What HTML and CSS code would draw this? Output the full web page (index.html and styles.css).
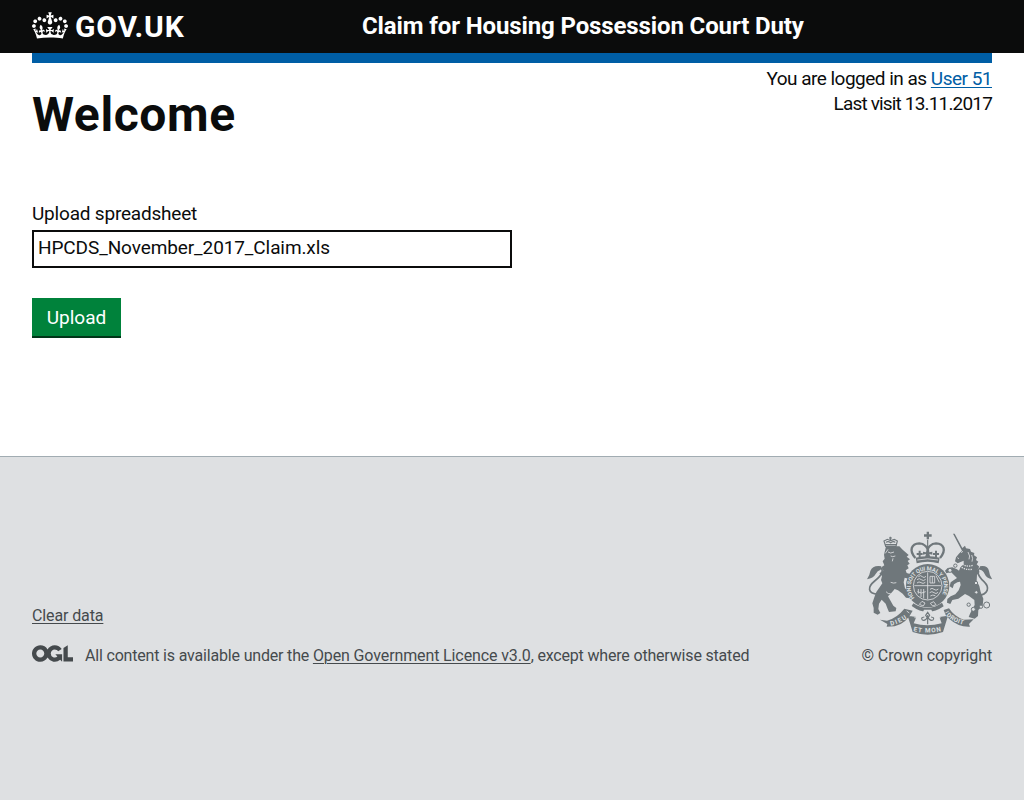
FILE: index.html
```html
<!DOCTYPE html>
<html lang="en">
<head>
<meta charset="utf-8">
<title>Claim for Housing Possession Court Duty</title>
<link rel="stylesheet" href="styles.css">
</head>
<body>
<header class="header">
  <div class="header-inner">
    <a class="logo" href="#">
      <svg class="crown" viewBox="0 0 132 97" aria-hidden="true"><path fill="currentColor" fill-rule="evenodd" d="M25 30.2c3.5 1.5 7.7-.2 9.1-3.7 1.5-3.6-.2-7.8-3.9-9.2-3.6-1.4-7.6.3-9.1 3.9-1.4 3.5.3 7.5 3.9 9zM9 39.5c3.6 1.5 7.8-.2 9.2-3.7 1.5-3.6-.2-7.8-3.9-9.1-3.6-1.5-7.6.2-9.1 3.8-1.4 3.5.3 7.5 3.8 9zM4.4 57.2c3.5 1.5 7.7-.2 9.1-3.8 1.5-3.6-.2-7.7-3.9-9.1-3.5-1.5-7.6.3-9.1 3.8-1.4 3.5.3 7.6 3.9 9.1zm38.3-21.4c3.5 1.5 7.7-.2 9.1-3.8 1.5-3.6-.2-7.7-3.9-9.1-3.6-1.5-7.6.3-9.1 3.8-1.3 3.6.4 7.7 3.9 9.1zm64.4-5.6c-3.6 1.5-7.8-.2-9.1-3.7-1.5-3.6.2-7.8 3.8-9.2 3.6-1.4 7.7.3 9.2 3.9 1.3 3.5-.4 7.5-3.9 9zm15.9 9.3c-3.6 1.5-7.7-.2-9.1-3.7-1.5-3.6.2-7.8 3.7-9.1 3.6-1.5 7.7.2 9.2 3.8 1.5 3.5-.3 7.5-3.8 9zm4.7 17.7c-3.6 1.5-7.8-.2-9.2-3.8-1.5-3.6.2-7.7 3.9-9.1 3.6-1.5 7.7.3 9.2 3.8 1.3 3.5-.4 7.6-3.9 9.1zM89.3 35.8c-3.6 1.5-7.8-.2-9.2-3.8-1.4-3.6.2-7.7 3.9-9.1 3.6-1.5 7.7.3 9.2 3.8 1.4 3.6-.3 7.7-3.9 9.1zM69.7 17.7l8.9 4.7V9.3l-8.9 2.8c-.2-.3-.5-.6-.9-.9L72.4 0H59.6l3.5 11.2c-.3.3-.6.5-.9.9l-8.8-2.8v13.1l8.8-4.7c.3.3.6.7.9.9l-5 15.4v.1c-.2.8-.4 1.6-.4 2.4 0 4.1 3.1 7.5 7 8.1h.2c.3 0 .7.1 1 .1.4 0 .7 0 1-.1h.2c4-.6 7.1-4.1 7.1-8.1 0-.8-.1-1.7-.4-2.4V34l-5.1-15.4c.4-.2.7-.6 1-.9zM66 92.8c16.9 0 32.8 1.1 47.1 3.2 4-16.9 8.9-26.7 14-33.5l-9.6-3.4c1 4.9 1.1 7.2 0 10.2-1.5-1.4-3-4.3-4.2-8.7L108.6 76c2.8-2 5-3.2 7.5-3.3-4.4 9.4-10 11.9-13.6 11.2-4.3-.8-6.3-4.6-5.6-7.9 1-4.7 5.7-5.9 8-.5 4.3-8.7-3-11.4-7.6-8.8 7.1-7.2 7.9-13.5 2.1-21.1-8 6.1-8.1 12.3-4.5 20.8-4.7-5.4-12.1-2.5-9.5 6.2 3.4-5.2 7.9-2 7.2 3.1-.6 4.3-6.4 7.8-13.5 7.2-10.3-.9-10.9-8-11.2-13.8 2.5-.5 7.1 1.8 11 7.3L80.2 60c-4.1 4.4-8 5.3-12.3 5.4 1.4-4.4 8-11.6 8-11.6H55.5s6.4 7.2 7.9 11.6c-4.2-.1-8-1-12.3-5.4l1.4 16.4c3.9-5.5 8.5-7.7 10.9-7.3-.3 5.8-.9 12.8-11.1 13.8-7.2.6-12.9-2.9-13.5-7.2-.7-5 3.8-8.3 7.1-3.1 2.7-8.7-4.6-11.6-9.4-6.2 3.7-8.5 3.6-14.7-4.6-20.8-5.8 7.6-5 13.9 2.2 21.1-4.7-2.6-11.9.1-7.7 8.8 2.3-5.5 7.1-4.2 8.1.5.7 3.3-1.3 7.1-5.7 7.9-3.5.7-9-1.8-13.5-11.2 2.5.1 4.7 1.3 7.5 3.3l-4.7-15.4c-1.2 4.4-2.7 7.2-4.3 8.7-1.1-3-.9-5.3 0-10.2l-9.5 3.4c5 6.9 9.9 16.7 14 33.5 14.8-2.1 30.8-3.2 47.7-3.2z"/></svg>
      <span class="logo-text">GOV.UK</span>
    </a>
    <a class="service" href="#">Claim for Housing Possession Court Duty</a>
  </div>
</header>
<div class="container">
  <main class="main">
    <div class="intro">
      <h1 class="title">Welcome</h1>
      <div class="session">
        <div class="login">You are logged in as <a class="link" href="#">User 51</a></div>
        <div class="visit">Last visit 13.11.2017</div>
      </div>
    </div>
    <form class="form">
      <label class="label" for="sheet"><span class="label-text">Upload spreadsheet</span></label>
      <input class="input" id="sheet" type="text" value="HPCDS_November_2017_Claim.xls">
      <button class="button" type="button">Upload</button>
    </form>
  </main>
</div>
<footer class="footer">
  <div class="footer-inner">
    <div class="footer-left">
      <a class="footer-link clear" href="#">Clear data</a>
      <div class="licence">
        <svg class="ogl" viewBox="0 0 483.2 195.7" aria-hidden="true"><path fill="currentColor" d="M421.5 142.8V.1l-50.7 32.3v161.1h112.4v-50.7zm-122.3-9.6A47.12 47.12 0 0 1 221 97.8c0-26 21.1-47.1 47.1-47.1 16.7 0 31.4 8.7 39.7 21.8l42.7-27.2A97.63 97.63 0 0 0 268.1 0c-36.5 0-68.3 20.1-85.1 49.7A98 98 0 0 0 97.8 0C43.9 0 0 43.9 0 97.8s43.9 97.8 97.8 97.8c36.5 0 68.3-20.1 85.1-49.7a97.76 97.76 0 0 0 149.6 25.4l19.4 22.2h3v-87.8h-80l24.3 27.5zM97.8 145c-26 0-47.1-21.1-47.1-47.1s21.1-47.1 47.1-47.1 47.1 21.1 47.1 47.1S123.8 145 97.8 145"/></svg>
        <span class="licence-text">All content is available under the <a class="footer-link" href="#">Open Government Licence v3.0</a>, except where otherwise stated</span>
      </div>
    </div>
    <a class="copyright" href="#">
      <svg class="arms" viewBox="18 18 378 312" aria-hidden="true">
        <defs>
          <path id="garter" d="M164 219A50 50 0 1 1 240 219"/>
          <path id="scroll-l" d="M92 302Q122 296 146 277"/>
          <path id="scroll-m" d="M160 318Q203 328 248 317"/>
          <path id="scroll-r" d="M258 272Q284 294 316 301"/>
        </defs>
        <!-- lion -->
        <path class="ink" d="M78 64h40l10 10 18 16-6 5 10 8-7 5 6 8-7 5 4 9-9 6 3 8 12 4 2 8-6 6-14-4-3 14 4 18 12 10 7 10-4 10-12-2-10-12-14-10-10-4-8 10-12 12 8 14 8 14 9 7-2 10-20 2-4-9-6-16-12-12-8 12-2 16 6 12-8 5-12-6 0-14-4-14 6-18 6-16 10-14 8-12-4-10 3-12-8-8 12-8-6-10 9-6-5-12 6-8-2-12z"/>
        <path class="line tail" d="M54 208C22 206 22 186 44 168C70 148 74 128 54 127"/>
        <path class="ink" d="M64 124Q38 120 31 138Q29 152 21 163Q40 160 47 147Q52 137 62 134z"/>
        <path class="line" d="M77 64l-5-16 10-5 10 4 11-4 9 5-4 16zM77 59h32M91 35v11M87 39h9"/>
        <path class="line" d="M78 52q6-5 14 1 8-6 14-1"/>
        <path class="cut" d="M84 81l8 3 10-3M92 93l6 2 8-2M99 100l-2 9M84 73l-8 12"/>
        <path class="cut" d="M92 172q9 4 17 1M78 200q6 8 14 6"/>
        <!-- unicorn -->
        <path class="ink" d="M279 26l5 0 23 43 8-7 3 8 12 2 3 8 10 4-1 7 9 6-3 8 7 5-5 8 8 7-5 8 6 8-8 8-1 18 8 16 4 18 8 20-2 22-13 12-1 18-10 8-18-5 4-10 6-12 8-14-1-15-16-12-12-6-20 14-18 4-6 12-10-4 1-11 10-8 14-6 10-12 6-16-2-10-8 2-10 6-4 12-9-6 3-12 11-8 8-5-10-10-8-8-14 4-4-8 8-8 14-2 14 6 6 4 4-10 10-10 0-10-18 8-8-6 3-12 10-12 8-8z"/>
        <path class="cut" d="M303 83l6-4M324 81q8 13 3 22M335 90q5 10 1 20M292 98l5 3"/>
        <path class="cut dotted" d="M301 114q18 14 38 7M299 123q17 13 40 10"/>
        <path class="line tail" d="M352 213C386 207 390 188 372 170C350 150 347 130 368 127"/>
        <path class="ink" d="M360 124Q383 120 387 138Q389 154 397 163Q380 160 374 147Q370 136 360 134z"/>
        <g class="rings"><circle cx="326" cy="239" r="5"/><circle cx="340" cy="253" r="6"/><circle cx="363" cy="245" r="5"/><circle cx="380" cy="240" r="9"/><circle cx="348" cy="174" r="5"/><circle cx="349" cy="202" r="5"/><circle cx="270" cy="136" r="6"/><circle cx="286" cy="122" r="5"/></g>
        <!-- royal crown -->
        <path class="line crown-line" d="M166 99C146 76 154 56 178 55C194 55 203 72 203 72C203 72 212 55 228 55C252 56 260 76 240 99"/>
        <path class="ink" d="M167 98Q203 90 239 98L236 115Q203 106 170 115z"/>
        <path class="cut" d="M172 105q31-7 62 0"/>
        <path class="line" d="M203 44V73"/>
        <path class="ink" d="M200 20h7v8h8v7h-8v8h-7v-8h-8v-7h8zM200 72h7l1 10 9-2v9l-9-2 3 10h-16l3-10-9 2v-9l9 2zM176 77h6v7h6v6h-6v8h-6v-8h-6v-6h6zM225 77h6v7h6v6h-6v8h-6v-8h-6v-6h6z"/>
        <!-- garter and shield -->
        <circle class="ink" cx="203" cy="182" r="65"/>
        <circle class="cut" cx="203" cy="182" r="43"/>
        <text class="garter-text"><textPath href="#garter" textLength="214">HONI SOIT QUI MAL Y PENSE</textPath></text>
        <path class="cut" d="M203 142v81M163 182h80"/>
        <path class="cut" d="M175 155q7-6 12 0t11-1M171 164q7-6 13 0t13-1M171 174q6-6 12-1t13-1M210 154h14v20h-14zM228 152l10 20M217 154v20M175 192v14M183 192v24M191 192v28M172 200q13 8 25 0M210 193q6-6 12 0t13-1M209 203q7-6 13 0t12-1M211 213q7-5 15-1"/>
        <path class="cut" d="M178 238l8-9 9 5-5 9zM211 235l10-5 7 9-10 4z"/>
        <!-- ribbons and rose -->
        <path class="ink" d="M60 284l21 3q30-8 52-36l25 6q-18 38-54 47l-24 1 2-8zM143 272l26 4-8 19q40 12 84 0l-7-19 26-4-15 49q-46 16-91 0zM251 255l16-5q16 25 44 34l30-1-14 14 3 8q-34 2-62-23l-11-12zM160 235q43 28 86-2l5 11q-49 34-96-1z"/>
        <path class="cut" d="M163 278l12 0M242 278l-12 0M140 258l8 6M256 264l10-5"/>
        <path class="pale" d="M183 274l9-20h22l9 20-8 20h-24z"/>
        <path class="line" d="M203 298v-28M193 276q-12 1-6 9 9 4 16-9 7 13 16 9 6-8-6-9M203 262l-6 9 6 9 6-9z"/>
        <g class="scroll-text"><text><textPath href="#scroll-l" textLength="54">DIEU</textPath></text><text><textPath href="#scroll-m" textLength="84">ET MON</textPath></text><text><textPath href="#scroll-r" textLength="58">DROIT</textPath></text></g>
      </svg>
      <span class="copyright-text">© Crown copyright</span>
    </a>
  </div>
</footer>
</body>
</html>
```
FILE: styles.css
```css
* { box-sizing: border-box; }
body { margin: 0; background: #dee0e2; color: #0b0c0c; font: 19px/25px Roboto, sans-serif; }
a { color: inherit; }
.header { height: 53px; background: #0b0c0c; color: #fff; padding: 0 32px; }
.header-inner { display: flex; height: 53px; align-items: center; }
.logo, .service { text-decoration: none; font-weight: 700; }
.logo { display: flex; width: 330px; align-items: center; }
.crown { width: 36px; height: 27px; margin-right: 7px; margin-top: -2px; }
.logo-text { font: 700 30px/30px Roboto, sans-serif; letter-spacing: 0.8px; }
.service { font-size: 24px; letter-spacing: -0.12px; white-space: nowrap; }
.container { background: #fff; height: 403px; padding: 0 32px; }
.main { border-top: 10px solid #005ea5; }
.intro { display: flex; justify-content: space-between; height: 138px; }
.title { margin: 27px 0 0; font-size: 48px; line-height: 50px; letter-spacing: 0.6px; }
.session { text-align: right; padding-top: 3px; white-space: nowrap; }
.login { letter-spacing: -0.51px; }
.visit { letter-spacing: -0.83px; }
.link { color: #005ea5; text-underline-offset: 2px; text-decoration-thickness: 1px; }
.form { display: flex; flex-direction: column; align-items: flex-start; }
.label { height: 29px; letter-spacing: -0.2px; }
.input { width: 480px; height: 38px; border: 2px solid #0b0c0c; padding: 0 4px 3px; background: #fff; color: #0b0c0c; font: 19px/25px Roboto, sans-serif; letter-spacing: -0.1px; }
.button { width: 89px; height: 40px; margin-top: 30px; border: 0; border-bottom: 2px solid #003618; padding: 0; background: #00823b; color: #fff; font: 19px/25px Roboto, sans-serif; }
.footer { height: 344px; border-top: 1px solid #a1acb2; padding: 74px 32px 0; color: #454a4d; font-size: 16px; line-height: 20px; letter-spacing: -0.12px; }
.footer-inner { display: flex; justify-content: space-between; }
.footer-left { padding-top: 75px; }
.footer-link { text-underline-offset: 2px; text-decoration-thickness: 1px; }
.clear { display: block; width: max-content; }
.licence { display: flex; margin-top: 20px; white-space: nowrap; letter-spacing: -0.18px; }
.licence .footer-link { letter-spacing: -0.12px; }
.ogl { width: 41px; height: 17px; margin: -1px 12px 0 0; }
.copyright { display: flex; flex-direction: column; align-items: flex-end; text-decoration: none; white-space: nowrap; }
.arms { width: 126px; height: 104px; margin-bottom: 11px; letter-spacing: 0; }
.ink { fill: #6f777b; }
.pale { fill: #dee0e2; }
.line { fill: none; stroke: #6f777b; stroke-width: 3.5; }
.tail { stroke-width: 5; }
.crown-line { stroke-width: 7; }
.cut { fill: none; stroke: #dee0e2; stroke-width: 2.5; }
.dotted { stroke-width: 4; stroke-dasharray: 4 3; }
.rings { fill: #dee0e2; stroke: #6f777b; stroke-width: 3; }
.garter-text { font: 700 17px Roboto, sans-serif; fill: #dee0e2; }
.scroll-text { font: 700 19px Roboto, sans-serif; fill: #dee0e2; }
```
